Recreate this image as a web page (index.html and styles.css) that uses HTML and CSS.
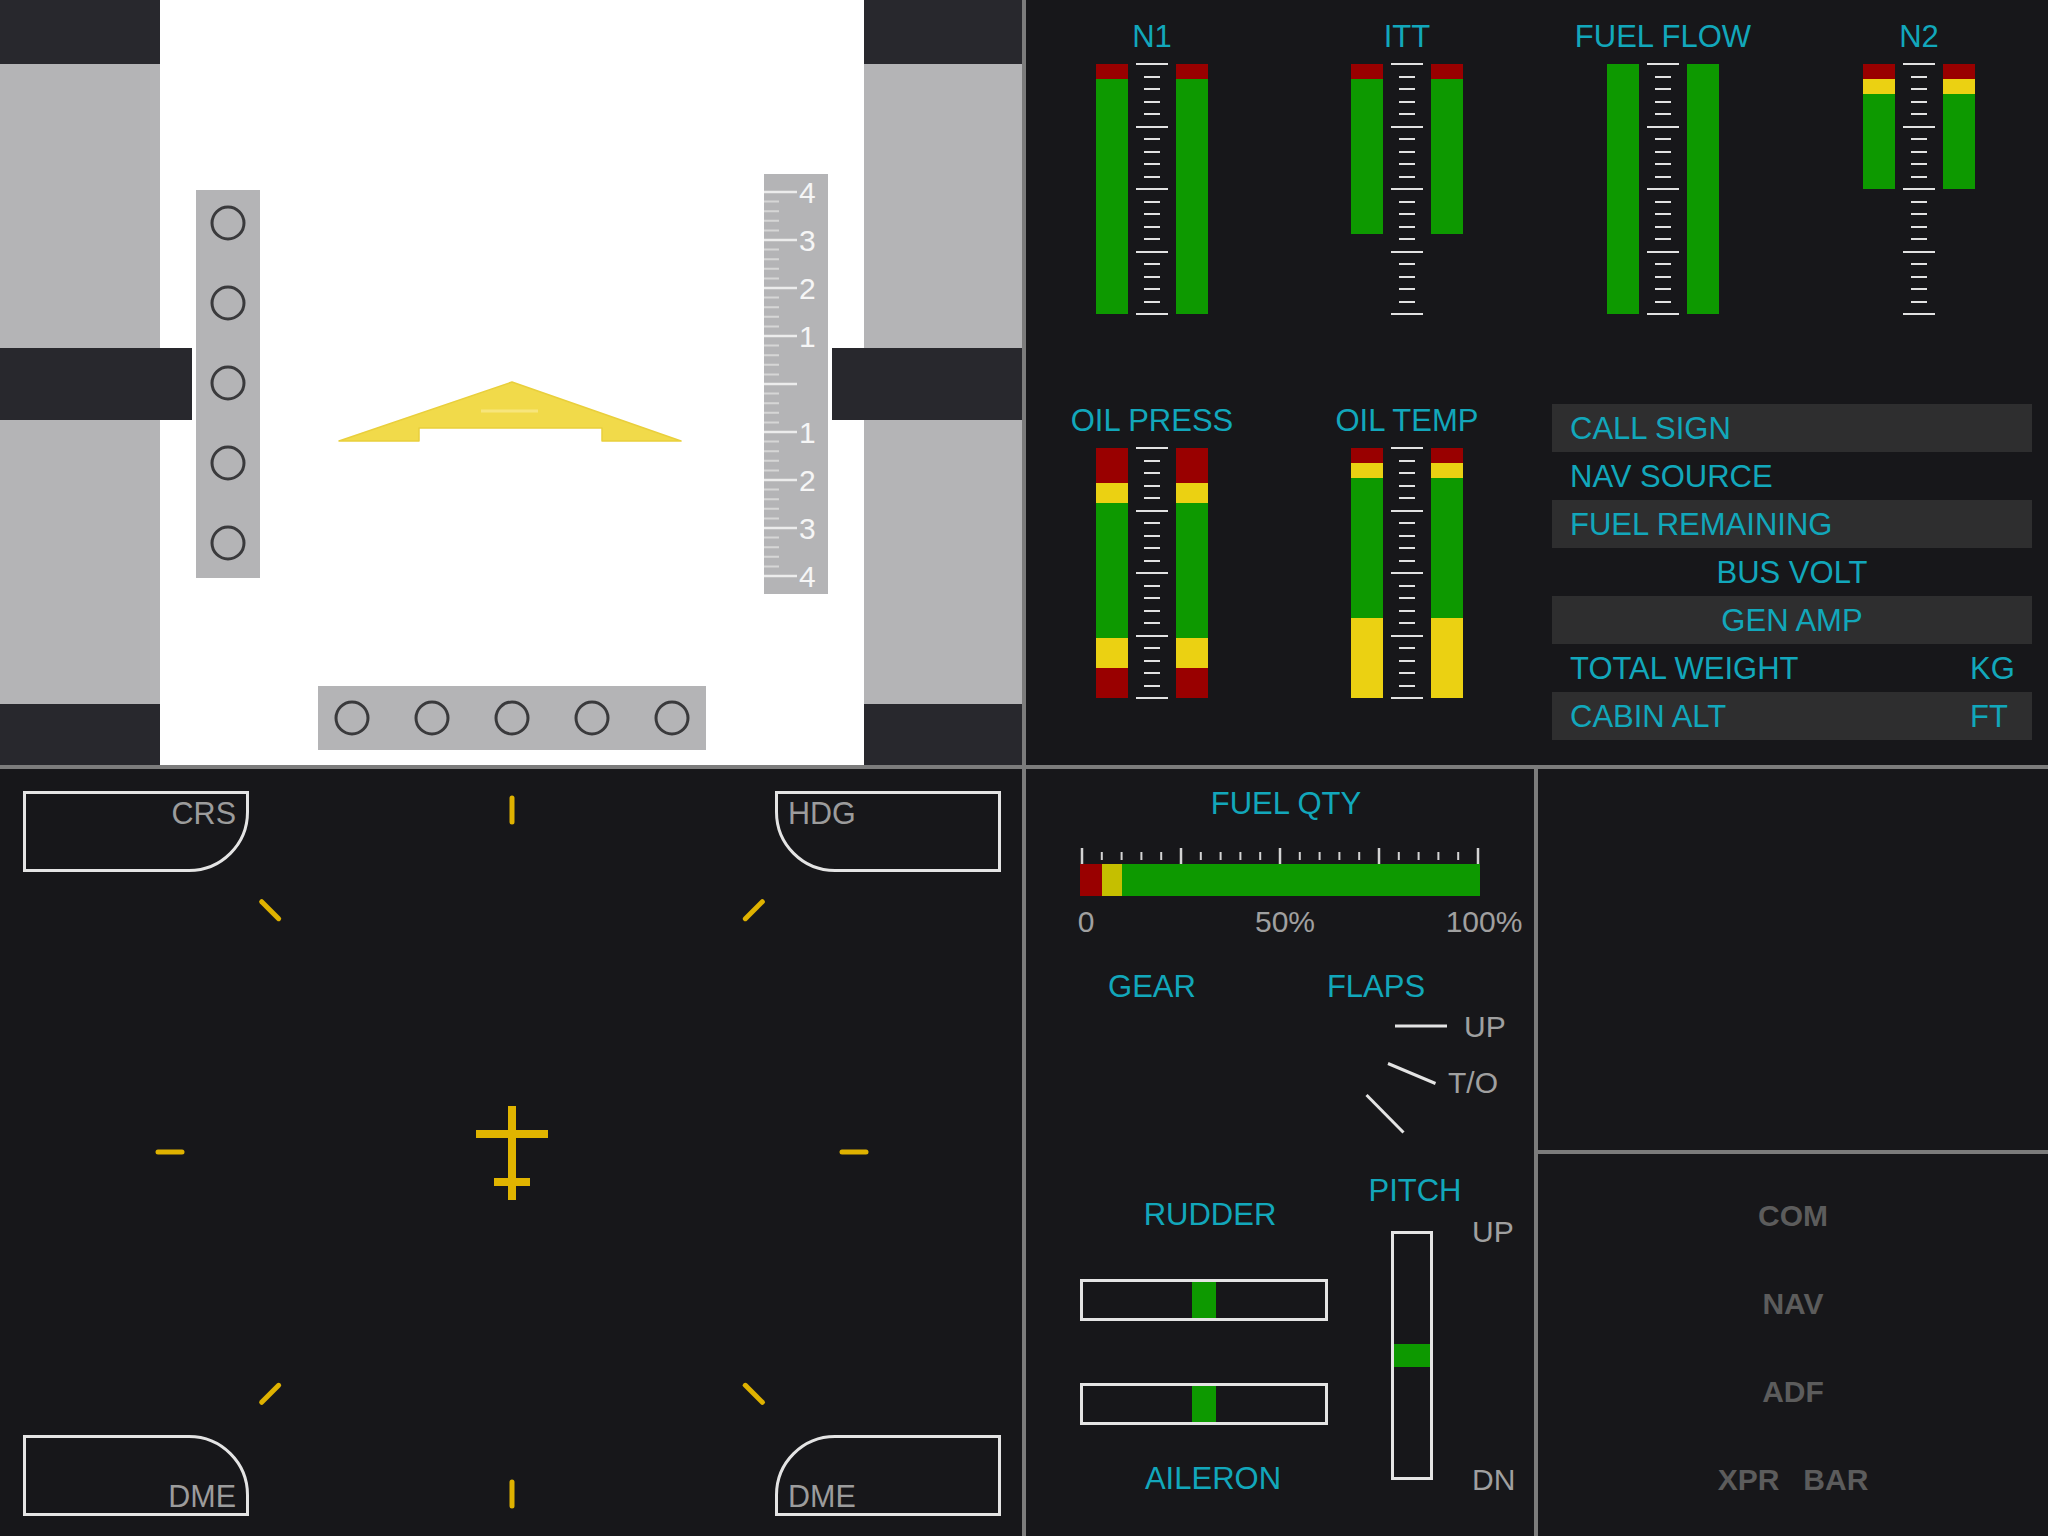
FILE: index.html
```html
<!DOCTYPE html>
<html>
<head>
<meta charset="utf-8">
<title>Cockpit display</title>
<link rel="stylesheet" href="styles.css">
</head>
<body>
<div class="screen">

  <!-- Primary flight display -->
  <div class="panel pfd">
    <svg class="pfd-art" width="1022" height="765" viewBox="0 0 1022 765">
      <rect width="1022" height="765" fill="#b4b4b6"/>
      <rect x="160" width="704" height="765" fill="#ffffff"/>
      <g fill="#28282d">
        <rect width="160" height="64"/>
        <rect x="864" width="158" height="64"/>
        <rect y="348" width="192" height="72"/>
        <rect x="832" y="348" width="190" height="72"/>
        <rect y="704" width="160" height="61"/>
        <rect x="864" y="704" width="158" height="61"/>
      </g>
      <rect x="196" y="190" width="64" height="388" fill="#b4b4b6"/>
      <rect x="318" y="686" width="388" height="64" fill="#b4b4b6"/>
      <g fill="none" stroke="#3a3a3c" stroke-width="3">
        <circle cx="228" cy="223" r="16"/>
        <circle cx="228" cy="303" r="16"/>
        <circle cx="228" cy="383" r="16"/>
        <circle cx="228" cy="463" r="16"/>
        <circle cx="228" cy="543" r="16"/>
        <circle cx="352" cy="718" r="16"/>
        <circle cx="432" cy="718" r="16"/>
        <circle cx="512" cy="718" r="16"/>
        <circle cx="592" cy="718" r="16"/>
        <circle cx="672" cy="718" r="16"/>
      </g>
      <rect x="764" y="174" width="64" height="420" fill="#b4b4b6"/>
      <path stroke="#d6d6d6" stroke-width="2" d="M764 201.6h15M764 211.2h15M764 220.8h15M764 230.4h15M764 249.6h15M764 259.2h15M764 268.8h15M764 278.4h15M764 297.6h15M764 307.2h15M764 316.8h15M764 326.4h15M764 345.6h15M764 355.2h15M764 364.8h15M764 374.4h15M764 393.6h15M764 403.2h15M764 412.8h15M764 422.4h15M764 441.6h15M764 451.2h15M764 460.8h15M764 470.4h15M764 489.6h15M764 499.2h15M764 508.8h15M764 518.4h15M764 537.6h15M764 547.2h15M764 556.8h15M764 566.4h15"/>
      <path stroke="#ececec" stroke-width="2.5" d="M764 192h33M764 240h33M764 288h33M764 336h33M764 384h33M764 432h33M764 480h33M764 528h33M764 576h33"/>
      <g class="vs-num" fill="#f6f6f6">
        <text x="799" y="202.5">4</text>
        <text x="799" y="250.5">3</text>
        <text x="799" y="298.5">2</text>
        <text x="799" y="346.5">1</text>
        <text x="799" y="442.5">1</text>
        <text x="799" y="490.5">2</text>
        <text x="799" y="538.5">3</text>
        <text x="799" y="586.5">4</text>
      </g>
      <polygon points="339,441 512,382 681,441 602,441 602,428 419,428 419,441" fill="#f1da4a" stroke="#e9cf3c" stroke-width="1.5" stroke-linejoin="round"/>
      <path d="M481 411H538" stroke="#f7e57c" stroke-width="3"/>
    </svg>
  </div>

  <!-- Engine indication -->
  <div class="panel engine">
    <div class="gauge">
      <div class="g-label">N1</div>
      <div class="g-body">
        <div class="bar"><i class="seg red" style="height:15px"></i><i class="seg green" style="height:235px"></i></div>
        <div class="scale"><i class="tick major"></i><i class="tick"></i><i class="tick"></i><i class="tick"></i><i class="tick"></i><i class="tick major"></i><i class="tick"></i><i class="tick"></i><i class="tick"></i><i class="tick"></i><i class="tick major"></i><i class="tick"></i><i class="tick"></i><i class="tick"></i><i class="tick"></i><i class="tick major"></i><i class="tick"></i><i class="tick"></i><i class="tick"></i><i class="tick"></i><i class="tick major"></i></div>
        <div class="bar"><i class="seg red" style="height:15px"></i><i class="seg green" style="height:235px"></i></div>
      </div>
    </div>
    <div class="gauge">
      <div class="g-label">ITT</div>
      <div class="g-body">
        <div class="bar"><i class="seg red" style="height:15px"></i><i class="seg green" style="height:155px"></i></div>
        <div class="scale"><i class="tick major"></i><i class="tick"></i><i class="tick"></i><i class="tick"></i><i class="tick"></i><i class="tick major"></i><i class="tick"></i><i class="tick"></i><i class="tick"></i><i class="tick"></i><i class="tick major"></i><i class="tick"></i><i class="tick"></i><i class="tick"></i><i class="tick"></i><i class="tick major"></i><i class="tick"></i><i class="tick"></i><i class="tick"></i><i class="tick"></i><i class="tick major"></i></div>
        <div class="bar"><i class="seg red" style="height:15px"></i><i class="seg green" style="height:155px"></i></div>
      </div>
    </div>
    <div class="gauge">
      <div class="g-label">FUEL FLOW</div>
      <div class="g-body">
        <div class="bar"><i class="seg green" style="height:250px"></i></div>
        <div class="scale"><i class="tick major"></i><i class="tick"></i><i class="tick"></i><i class="tick"></i><i class="tick"></i><i class="tick major"></i><i class="tick"></i><i class="tick"></i><i class="tick"></i><i class="tick"></i><i class="tick major"></i><i class="tick"></i><i class="tick"></i><i class="tick"></i><i class="tick"></i><i class="tick major"></i><i class="tick"></i><i class="tick"></i><i class="tick"></i><i class="tick"></i><i class="tick major"></i></div>
        <div class="bar"><i class="seg green" style="height:250px"></i></div>
      </div>
    </div>
    <div class="gauge">
      <div class="g-label">N2</div>
      <div class="g-body">
        <div class="bar"><i class="seg red" style="height:15px"></i><i class="seg yellow" style="height:15px"></i><i class="seg green" style="height:95px"></i></div>
        <div class="scale"><i class="tick major"></i><i class="tick"></i><i class="tick"></i><i class="tick"></i><i class="tick"></i><i class="tick major"></i><i class="tick"></i><i class="tick"></i><i class="tick"></i><i class="tick"></i><i class="tick major"></i><i class="tick"></i><i class="tick"></i><i class="tick"></i><i class="tick"></i><i class="tick major"></i><i class="tick"></i><i class="tick"></i><i class="tick"></i><i class="tick"></i><i class="tick major"></i></div>
        <div class="bar"><i class="seg red" style="height:15px"></i><i class="seg yellow" style="height:15px"></i><i class="seg green" style="height:95px"></i></div>
      </div>
    </div>
    <div class="gauge">
      <div class="g-label">OIL PRESS</div>
      <div class="g-body">
        <div class="bar"><i class="seg red" style="height:35px"></i><i class="seg yellow" style="height:20px"></i><i class="seg green" style="height:135px"></i><i class="seg yellow" style="height:30px"></i><i class="seg red" style="height:30px"></i></div>
        <div class="scale"><i class="tick major"></i><i class="tick"></i><i class="tick"></i><i class="tick"></i><i class="tick"></i><i class="tick major"></i><i class="tick"></i><i class="tick"></i><i class="tick"></i><i class="tick"></i><i class="tick major"></i><i class="tick"></i><i class="tick"></i><i class="tick"></i><i class="tick"></i><i class="tick major"></i><i class="tick"></i><i class="tick"></i><i class="tick"></i><i class="tick"></i><i class="tick major"></i></div>
        <div class="bar"><i class="seg red" style="height:35px"></i><i class="seg yellow" style="height:20px"></i><i class="seg green" style="height:135px"></i><i class="seg yellow" style="height:30px"></i><i class="seg red" style="height:30px"></i></div>
      </div>
    </div>
    <div class="gauge">
      <div class="g-label">OIL TEMP</div>
      <div class="g-body">
        <div class="bar"><i class="seg red" style="height:15px"></i><i class="seg yellow" style="height:15px"></i><i class="seg green" style="height:140px"></i><i class="seg yellow" style="height:80px"></i></div>
        <div class="scale"><i class="tick major"></i><i class="tick"></i><i class="tick"></i><i class="tick"></i><i class="tick"></i><i class="tick major"></i><i class="tick"></i><i class="tick"></i><i class="tick"></i><i class="tick"></i><i class="tick major"></i><i class="tick"></i><i class="tick"></i><i class="tick"></i><i class="tick"></i><i class="tick major"></i><i class="tick"></i><i class="tick"></i><i class="tick"></i><i class="tick"></i><i class="tick major"></i></div>
        <div class="bar"><i class="seg red" style="height:15px"></i><i class="seg yellow" style="height:15px"></i><i class="seg green" style="height:140px"></i><i class="seg yellow" style="height:80px"></i></div>
      </div>
    </div>
    <div class="info">
      <div class="row alt"><span class="name">CALL SIGN</span></div>
      <div class="row"><span class="name">NAV SOURCE</span></div>
      <div class="row alt"><span class="name">FUEL REMAINING</span></div>
      <div class="row center"><span>BUS VOLT</span></div>
      <div class="row alt center"><span>GEN AMP</span></div>
      <div class="row"><span class="name">TOTAL WEIGHT</span><span class="unit">KG</span></div>
      <div class="row alt"><span class="name">CABIN ALT</span><span class="unit">FT</span></div>
    </div>
  </div>

  <!-- Navigation display -->
  <div class="panel hsi">
    <svg class="hsi-art" width="1022" height="767" viewBox="0 0 1022 767">
      <g transform="translate(512 383)" stroke="#dfb200" stroke-width="5" stroke-linecap="round">
        <line x1="0" y1="-354" x2="0" y2="-330"/>
        <line x1="0" y1="-354" x2="0" y2="-330" transform="rotate(45)"/>
        <line x1="0" y1="-354" x2="0" y2="-330" transform="rotate(90)"/>
        <line x1="0" y1="-354" x2="0" y2="-330" transform="rotate(135)"/>
        <line x1="0" y1="-354" x2="0" y2="-330" transform="rotate(180)"/>
        <line x1="0" y1="-354" x2="0" y2="-330" transform="rotate(225)"/>
        <line x1="0" y1="-354" x2="0" y2="-330" transform="rotate(270)"/>
        <line x1="0" y1="-354" x2="0" y2="-330" transform="rotate(315)"/>
      </g>
      <g fill="#e0b400">
        <rect x="508" y="337" width="8" height="94"/>
        <rect x="476" y="361" width="72" height="8"/>
        <rect x="494" y="409" width="36" height="8"/>
      </g>
    </svg>
    <div class="hsi-row">
      <div class="corner crs">CRS</div>
      <div class="corner hdg">HDG</div>
    </div>
    <div class="hsi-row">
      <div class="corner dme-l">DME</div>
      <div class="corner dme-r">DME</div>
    </div>
  </div>

  <div class="quad-br">
    <!-- Systems -->
    <div class="panel systems">
      <div class="fq">
        <div class="fq-label">FUEL QTY</div>
        <svg class="fq-ticks" width="400" height="16" viewBox="0 0 400 16">
          <path stroke="#d4d4d4" stroke-width="2.5" d="M2 0v16M101 0v16M200 0v16M299 0v16M398 0v16"/>
          <path stroke="#d4d4d4" stroke-width="2" d="M21.8 4v8M41.6 4v8M61.4 4v8M81.2 4v8M120.8 4v8M140.6 4v8M160.4 4v8M180.2 4v8M219.8 4v8M239.6 4v8M259.4 4v8M279.2 4v8M318.8 4v8M338.6 4v8M358.4 4v8M378.2 4v8"/>
        </svg>
        <div class="fq-bar"><i class="seg red" style="width:22px"></i><i class="seg olive" style="width:20px"></i><i class="seg green fill"></i></div>
        <div class="fq-nums"><span>0</span><span>50%</span><span>100%</span></div>
      </div>
      <div class="gf">
        <div class="gf-labels"><span>GEAR</span><span>FLAPS</span></div>
        <svg class="gf-art" width="508" height="150" viewBox="0 233 508 150">
          <g stroke="#e4e4e4" stroke-width="3">
            <line x1="369" y1="257" x2="421" y2="257"/>
            <line x1="362" y1="294.5" x2="409.5" y2="314.5"/>
            <line x1="340.5" y1="326" x2="377.5" y2="363.5"/>
          </g>
          <g class="gf-text" fill="#a0a0a0">
            <text x="438" y="268">UP</text>
            <text x="422" y="324">T/O</text>
          </g>
        </svg>
      </div>
      <div class="ctl">
        <div class="ctl-h">
          <div class="c-label rudder">RUDDER</div>
          <div class="hbox first"><i class="knob"></i></div>
          <div class="hbox second"><i class="knob"></i></div>
          <div class="c-label aileron">AILERON</div>
        </div>
        <div class="ctl-v">
          <div class="c-label pitch">PITCH</div>
          <div class="pitch-row">
            <div class="vbox"><i class="knob"></i></div>
            <div class="vlabels"><span>UP</span><span>DN</span></div>
          </div>
        </div>
      </div>
    </div>

    <div class="side">
      <div class="panel blank"></div>
      <div class="panel radios">
        <div>COM</div>
        <div>NAV</div>
        <div>ADF</div>
        <div class="xpr"><span>XPR</span><span>BAR</span></div>
      </div>
    </div>
  </div>

</div>
</body>
</html>
```

FILE: styles.css
```css
* {
  box-sizing: border-box;
  margin: 0;
  padding: 0;
}

html,
body {
  width: 2048px;
  height: 1536px;
  overflow: hidden;
}

body {
  background: #7c7c7c;
  font-family: "Liberation Sans", Arial, sans-serif;
}

.screen {
  display: grid;
  grid-template-columns: 1022px 1022px;
  grid-template-rows: 765px 767px;
  gap: 4px;
  width: 2048px;
  height: 1536px;
}

.panel {
  background: #17171a;
  position: relative;
  overflow: hidden;
}

/* ---------- PFD ---------- */
.pfd-art {
  display: block;
}

.vs-num text {
  font-family: "Liberation Sans", Arial, sans-serif;
  font-size: 30px;
}

/* ---------- Engine ---------- */
.engine {
  display: grid;
  grid-template-columns: 254px 256px 256px 256px;
  grid-template-rows: 384px 381px;
}

.gauge {
  display: flex;
  flex-direction: column;
  align-items: center;
  margin-left: -2px;
}

.g-label {
  color: #12a7bb;
  font-size: 31px;
  line-height: 30px;
  padding-top: 22px;
  margin-bottom: 12px;
  white-space: nowrap;
}

.g-body {
  display: flex;
  gap: 8px;
  height: 250px;
}

.bar {
  width: 32px;
  height: 250px;
  display: flex;
  flex-direction: column;
}

.seg {
  display: block;
  flex: none;
}

.red {
  background: #990000;
}

.green {
  background: #0d9900;
}

.yellow {
  background: #ebd112;
}

.olive {
  background: #c5bf00;
}

.scale {
  width: 32px;
  height: 252px;
  margin-top: -1px;
  display: flex;
  flex-direction: column;
  justify-content: space-between;
  align-items: center;
}

.tick {
  display: block;
  width: 16px;
  height: 2px;
  background: #e2e2e2;
}

.tick.major {
  width: 32px;
}

.info {
  grid-column: 3 / 5;
  margin: 20px 16px 0 16px;
}

.row {
  display: flex;
  height: 48px;
  padding-left: 18px;
  color: #12a7bb;
  font-size: 31px;
  line-height: 50px;
  white-space: nowrap;
}

.row.alt {
  background: #2e2e2f;
}

.row.center {
  justify-content: center;
  padding-left: 0;
}

.row .name {
  flex: 1;
}

.row .unit {
  width: 62px;
}

/* ---------- HSI ---------- */
.hsi {
  display: flex;
  flex-direction: column;
  justify-content: space-between;
  padding: 22px 21px 20px 23px;
}

.hsi-art {
  position: absolute;
  left: 0;
  top: 0;
}

.hsi-row {
  position: relative;
  display: flex;
  justify-content: space-between;
}

.corner {
  display: flex;
  width: 226px;
  height: 81px;
  border: 3px solid #e4e4e4;
  padding: 4px 10px;
  color: #9c9c9c;
  font-size: 30.5px;
  line-height: 30px;
}

.crs {
  border-bottom-right-radius: 60px;
  justify-content: flex-end;
}

.hdg {
  border-bottom-left-radius: 60px;
}

.dme-l {
  border-top-right-radius: 60px;
  justify-content: flex-end;
  align-items: flex-end;
  padding-bottom: 2px;
}

.dme-r {
  border-top-left-radius: 60px;
  align-items: flex-end;
  padding-bottom: 2px;
}

/* ---------- Bottom right quadrant ---------- */
.quad-br {
  display: grid;
  grid-template-columns: 508px 510px;
  gap: 4px;
}

.side {
  display: grid;
  grid-template-rows: 381px 382px;
  gap: 4px;
}

/* ---------- Systems ---------- */
.fq {
  height: 168px;
  padding-left: 54px;
}

.fq-label {
  width: 400px;
  padding: 20px 0 0 12px;
  text-align: center;
  color: #12a7bb;
  font-size: 31px;
  line-height: 30px;
  white-space: nowrap;
}

.fq-ticks {
  display: block;
  margin-top: 29px;
}

.fq-bar {
  display: flex;
  width: 400px;
  height: 32px;
}

.fq-bar .fill {
  flex: 1;
}

.fq-nums {
  display: flex;
  gap: 119px;
  margin: 11px 0 0 -34px;
}

.fq-nums span {
  width: 80px;
  text-align: center;
  color: #a0a0a0;
  font-size: 30px;
  line-height: 30px;
}

.gf {
  height: 215px;
  padding-top: 35px;
}

.gf-labels {
  display: flex;
  gap: 64px;
  padding-left: 46px;
}

.gf-labels span {
  width: 160px;
  text-align: center;
  color: #12a7bb;
  font-size: 31px;
  line-height: 30px;
}

.gf-art {
  display: block;
}

.gf-text text {
  font-family: "Liberation Sans", Arial, sans-serif;
  font-size: 30px;
}

.ctl {
  display: grid;
  grid-template-columns: 248px 206px;
  padding-left: 54px;
  height: 384px;
}

.ctl-h,
.ctl-v {
  display: flex;
  flex-direction: column;
}

.c-label {
  text-align: center;
  color: #12a7bb;
  font-size: 31px;
  line-height: 30px;
  white-space: nowrap;
}

.c-label.rudder {
  margin-top: 48px;
  padding-left: 12px;
}

.c-label.aileron {
  margin-top: 39px;
  padding-left: 18px;
}

.c-label.pitch {
  margin-top: 24px;
  padding-right: 32px;
}

.hbox {
  display: flex;
  justify-content: center;
  height: 42px;
  border: 3px solid #e4e4e4;
}

.hbox.first {
  margin-top: 49px;
}

.hbox.second {
  margin-top: 62px;
}

.hbox .knob {
  display: block;
  width: 24px;
  background: #0d9900;
}

.pitch-row {
  display: flex;
  margin-top: 25px;
}

.vbox {
  display: flex;
  flex-direction: column;
  justify-content: center;
  width: 42px;
  height: 249px;
  margin-left: 63px;
  border: 3px solid #e4e4e4;
}

.vbox .knob {
  display: block;
  height: 23px;
  background: #0d9900;
}

.vlabels {
  display: flex;
  flex-direction: column;
  justify-content: space-between;
  height: 278px;
  margin: -14px 0 0 39px;
  color: #a0a0a0;
  font-size: 30px;
  line-height: 30px;
}

/* ---------- Radios ---------- */
.radios {
  display: flex;
  flex-direction: column;
  align-items: center;
  padding-top: 18px;
  color: #5c5c5c;
  font-size: 30px;
  font-weight: bold;
  line-height: 88px;
}

.xpr {
  display: flex;
  gap: 24px;
}
```
